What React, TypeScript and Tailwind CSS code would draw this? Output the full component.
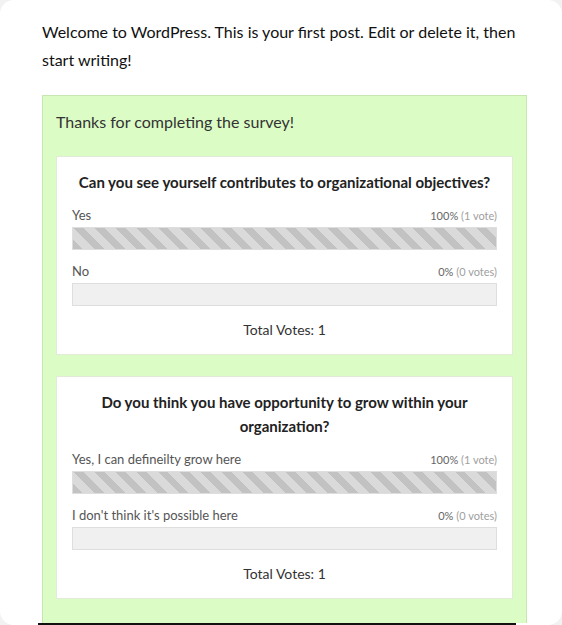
import React from "react";

type Answer = {
  label: string;
  percent: number;
  votes: number;
};

type Question = {
  title: string;
  answers: Answer[];
  total: number;
};

const QUESTIONS: Question[] = [
  {
    title: "Can you see yourself contributes to organizational objectives?",
    answers: [
      { label: "Yes", percent: 100, votes: 1 },
      { label: "No", percent: 0, votes: 0 },
    ],
    total: 1,
  },
  {
    title: "Do you think you have opportunity to grow within your organization?",
    answers: [
      { label: "Yes, I can defineilty grow here", percent: 100, votes: 1 },
      { label: "I don't think it's possible here", percent: 0, votes: 0 },
    ],
    total: 1,
  },
];

function ResultBar({ answer }: { answer: Answer }) {
  return (
    <div className="mt-[12px] first:mt-0">
      <div className="flex items-end justify-between h-[18px]">
        <span className="text-[13px] leading-[18px] text-[#555]">{answer.label}</span>
        <span className="text-[11px] leading-[16px] text-[#666]">
          {answer.percent}%{" "}
          <span className="text-[#a0a0a0]">
            ({answer.votes} {answer.votes === 1 ? "vote" : "votes"})
          </span>
        </span>
      </div>
      <div className="mt-[3px] h-[23px] bg-[#f0f0f0] border border-[#dedede]">
        <div
          className="h-full bg-[repeating-linear-gradient(45deg,#c2c2c2_0px,#c2c2c2_7px,#dadada_7px,#dadada_15px)]"
          style={{ width: `${answer.percent}%` }}
        />
      </div>
    </div>
  );
}

function QuestionCard({ question }: { question: Question }) {
  return (
    <div className="bg-white border border-[#e2ebd8] px-[15px] pt-[13px] pb-[14px]">
      <h3 className="text-center font-bold text-[15px] leading-[24px] text-[#222] px-[4px]">
        {question.title}
      </h3>
      <div className="mt-[12px]">
        {question.answers.map((a) => (
          <ResultBar key={a.label} answer={a} />
        ))}
      </div>
      <p className="mt-[14px] text-center text-[14px] leading-[20px] text-[#333]">
        Total Votes: {question.total}
      </p>
    </div>
  );
}

export default function App() {
  return (
    <div
      className="min-h-screen bg-[#f2f2f2]"
      style={{ fontFamily: 'Lato, "Open Sans", sans-serif' }}
    >
      <div className="h-[625px] bg-white rounded-[14px] overflow-hidden pl-[42px] pr-[30px] pt-[18px] flex flex-col">
        <p className="text-[16px] leading-[28px] text-[#111]">
          Welcome to WordPress. This is your first post. Edit or delete it, then start writing!
        </p>
        <div className="mt-[21px] w-[485px] flex-1 bg-[#dcfcc6] border border-[#c8e7b0] border-b-0 px-[13px] pt-[14px]">
          <p className="text-[16px] leading-[24px] text-[#333]">Thanks for completing the survey!</p>
          <div className="mt-[22px] flex flex-col gap-[21px]">
            {QUESTIONS.map((q) => (
              <QuestionCard key={q.title} question={q} />
            ))}
          </div>
        </div>
        <div className="-ml-[4px] w-[478px] h-[2px] bg-[#111] shrink-0" />
      </div>
    </div>
  );
}
